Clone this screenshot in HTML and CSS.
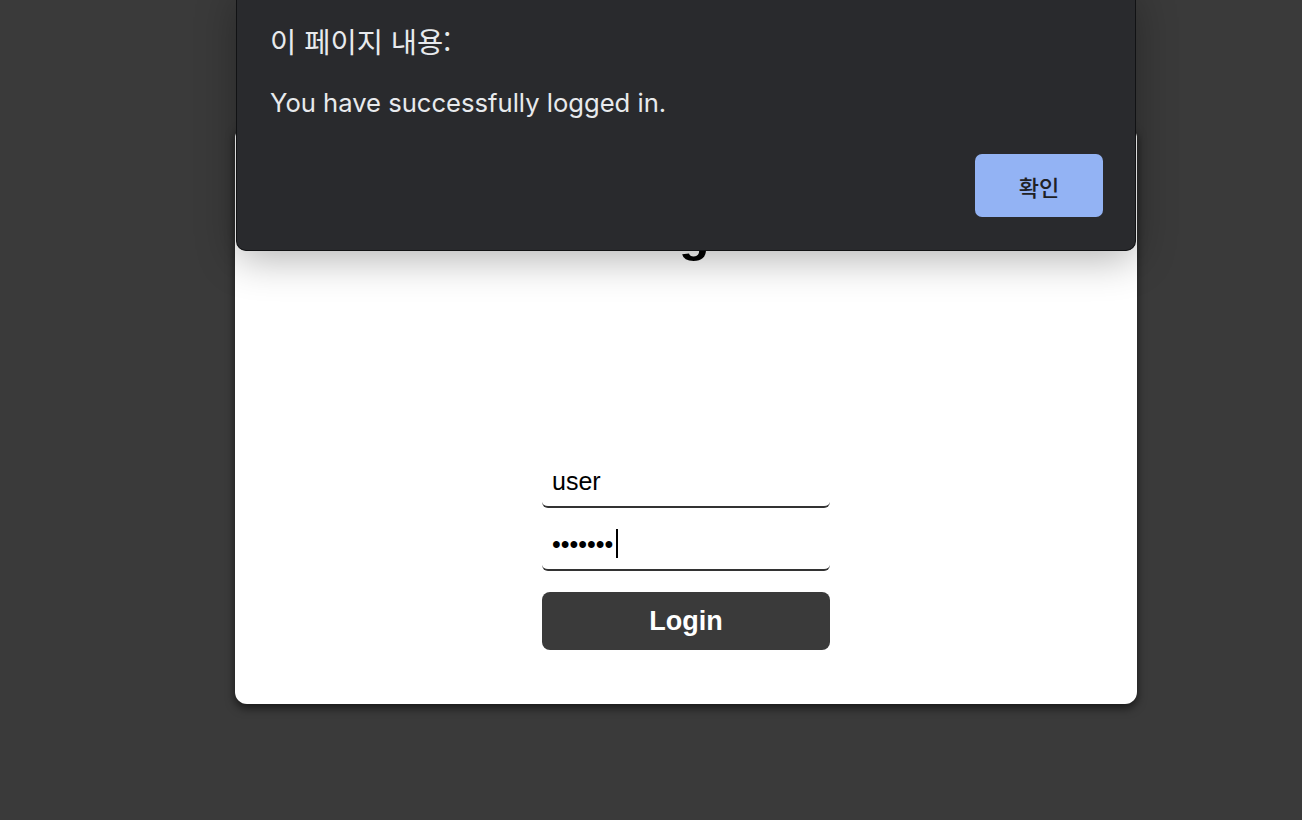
FILE: index.html
```html
<!DOCTYPE html>
<html lang="ko">
<head>
<meta charset="utf-8">
<title>Login</title>
<link rel="stylesheet" href="styles.css">
</head>
<body>
  <main class="card">
    <h1 class="title">Login</h1>
    <form class="form">
      <input class="field" type="text" value="user">
      <div class="field-wrap">
        <input class="field" type="password" value="1234567">
        <span class="caret"></span>
      </div>
      <button class="submit" type="button">Login</button>
    </form>
  </main>

  <div class="dialog" role="alertdialog">
    <div class="dialog-title">이 페이지 내용:</div>
    <div class="dialog-msg">You have successfully logged in.</div>
    <div class="dialog-actions">
      <button class="dialog-ok" type="button">확인</button>
    </div>
  </div>
</body>
</html>
```

FILE: styles.css
```css
* { box-sizing: border-box; }

html, body {
  margin: 0;
  height: 100%;
}

body {
  background: #3a3a3a;
  font-family: "Liberation Sans", Arial, sans-serif;
  padding-top: 126px;
  overflow: hidden;
}

.card {
  margin-left: 235px;
  width: 902px;
  height: 578px;
  background: #ffffff;
  border-radius: 12px;
  box-shadow: 0 4px 10px rgba(0, 0, 0, 0.6);
  display: flex;
  flex-direction: column;
  align-items: center;
  padding-top: 80px;
}

.title {
  margin: 0;
  font-size: 50px;
  line-height: 56px;
  font-weight: 700;
  color: #000;
}

.form {
  margin-top: 194px;
  width: 288px;
  display: flex;
  flex-direction: column;
  gap: 11px;
}

.field-wrap {
  position: relative;
}

.field {
  display: block;
  height: 52px;
  width: 100%;
  border: none;
  border-bottom: 2px solid #333;
  border-radius: 6px;
  padding: 0 10px;
  font-family: "Liberation Sans", Arial, sans-serif;
  font-size: 25px;
  color: #000;
  background: #fff;
  outline: none;
}

.caret {
  position: absolute;
  left: 74px;
  top: 10px;
  width: 2px;
  height: 29px;
  background: #000;
}

.submit {
  margin-top: 10px;
  height: 58px;
  width: 100%;
  border: none;
  border-radius: 8px;
  background: #3a3a3a;
  color: #fff;
  font-family: "Liberation Sans", Arial, sans-serif;
  font-weight: 700;
  font-size: 27px;
}

.dialog {
  position: absolute;
  left: 236px;
  top: -10px;
  width: 900px;
  height: 261px;
  background: #292a2d;
  border: 1px solid #111214;
  border-top: none;
  border-radius: 0 0 10px 10px;
  box-shadow: 0 8px 40px rgba(0, 0, 0, 0.3);
  padding: 10px 32px 0 33px;
  font-family: "Inter", "Noto Sans CJK KR", sans-serif;
  color: #e8eaed;
  display: flex;
  flex-direction: column;
}

.dialog-title {
  font-family: "Noto Sans CJK KR", sans-serif;
  font-size: 28.5px;
  line-height: 34px;
  margin-top: 24px;
}

.dialog-msg {
  font-size: 25.6px;
  line-height: 34px;
  margin-top: 28px;
}

.dialog-actions {
  display: flex;
  justify-content: flex-end;
  margin-top: 34px;
}

.dialog-ok {
  width: 128px;
  height: 63px;
  border: none;
  border-radius: 7px;
  background: #93b3f4;
  color: #202124;
  font-family: "Noto Sans CJK KR", sans-serif;
  font-size: 22px;
  font-weight: 500;
}
```
